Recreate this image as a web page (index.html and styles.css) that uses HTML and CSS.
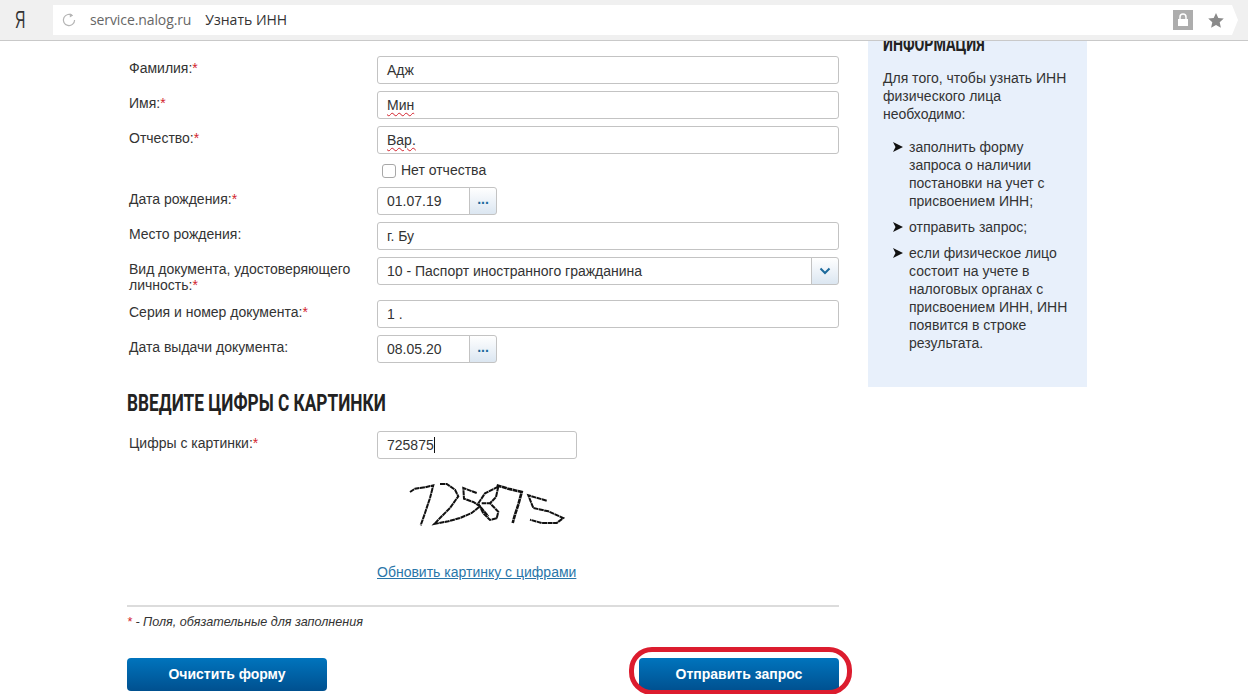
FILE: index.html
```html
<!DOCTYPE html>
<html>
  <head>
    <meta charset="utf-8">
    <title>Узнать ИНН</title>
    <link rel="stylesheet" href="styles.css">
  </head>
  <body>
    <div class="toolbar">
      <div class="ya">Я</div>
      <div class="omnibox">
        <svg class="reload" width="16" height="16" viewBox="0 0 16 16"><path d="M11.5 3.6A5.6 5.6 0 1 0 13.6 8" fill="none" stroke="#b5b5b5" stroke-width="1.2"/><path d="M8.8 1.2l3.2 2.3-3.2 1.9z" fill="#b5b5b5"/></svg>
        <span class="host">service.nalog.ru</span>
        <span class="page-title">Узнать ИНН</span>
        <span class="lock">
          <svg width="12" height="14" viewBox="0 0 12 14"><path d="M3 6V4a3 3 0 0 1 6 0v2" fill="none" stroke="#fff" stroke-width="1.5"/><rect x="1" y="6" width="10" height="7" fill="#fff"/></svg>
        </span>
        <svg class="star" width="16" height="15" viewBox="0 0 16 15"><path d="M8 0l2.3 5 5.5.6-4.1 3.7 1.2 5.4L8 12l-4.9 2.7 1.2-5.4L.2 5.600 5.700 5z" fill="#8a8a8a"/></svg>
      </div>
    </div>

    <div class="main">
      <div class="form">
        <div class="row">
          <div class="label">Фамилия:<span class="req">*</span></div>
          <div class="field">Адж</div>
        </div>
        <div class="row">
          <div class="label">Имя:<span class="req">*</span></div>
          <div class="field"><span class="typo">Мин</span></div>
        </div>
        <div class="row">
          <div class="label">Отчество:<span class="req">*</span></div>
          <div class="field"><span class="typo">Вар.</span></div>
        </div>
        <div class="row">
          <div></div>
          <div class="check"><span class="box"></span>Нет отчества</div>
        </div>
        <div class="row">
          <div class="label">Дата рождения:<span class="req">*</span></div>
          <div class="combo date">
            <div class="field">01.07.19</div>
            <div class="side dots">...</div>
          </div>
        </div>
        <div class="row">
          <div class="label">Место рождения:</div>
          <div class="field">г. Бу</div>
        </div>
        <div class="row">
          <div class="label">Вид документа, удостоверяющего личность:<span class="req">*</span></div>
          <div class="combo">
            <div class="field">10 - Паспорт иностранного гражданина</div>
            <div class="side">
              <svg width="12" height="8" viewBox="0 0 12 8"><path d="M1.500 1.500L6 6l4.500-4.500" fill="none" stroke="#1c6a9c" stroke-width="2"/></svg>
            </div>
          </div>
        </div>
        <div class="row">
          <div class="label">Серия и номер документа:<span class="req">*</span></div>
          <div class="field">1 .</div>
        </div>
        <div class="row">
          <div class="label">Дата выдачи документа:</div>
          <div class="combo date">
            <div class="field">08.05.20</div>
            <div class="side dots">...</div>
          </div>
        </div>

        <h2 class="title">Введите цифры с картинки</h2>

        <div class="row">
          <div class="label">Цифры с картинки:<span class="req">*</span></div>
          <div class="field captcha-field">725875<span class="caret"></span></div>
        </div>
        <div class="row">
          <div></div>
          <div>
            <svg class="captcha" width="160" height="50" viewBox="405 480 160 50" fill="none" stroke="#111" stroke-width="2" stroke-dasharray="5 .5">
              <path d="M410 492l5-3.300 10-1.400 8.300-2-3.300 12.700-5 15-4.300 12.300"/>
              <path d="M440 484h6.700l8.300 5.700 3.300 6.600-8.300 11.700-10 10-5.700 6 14-2.700 11.700-3.300 11.700-5 8.300-6.700"/>
              <path d="M476.700 493l-13.400-5 .7 10.700 9.300 3.300 6.700 4.300 8.300 10"/>
              <path d="M498.300 486.700L485 493.300l-6.700 10 5 10 6.700 6.700 6.700-1.700 1.600-6.600-8.300-8.400-8.300 0M498.300 486.700L496 497l-6 6.300"/>
              <path d="M496.700 485.300l11.600 3.400 13.400 3.300-3.400 12.700-3.300 10-2.300 8.300" stroke-width="2.600"/>
              <path d="M546.700 500.700l-18.400-5.400 5 12.700 15 3.300 15 6.700-6.600 5h-15l-11.700-3.300"/>
            </svg>
            <div><a class="refresh" href="#">Обновить картинку с цифрами</a></div>
          </div>
        </div>

        <div class="note"><span class="req">*</span> - Поля, обязательные для заполнения</div>

        <div class="buttons">
          <a class="btn" href="#">Очистить форму</a>
          <a class="btn btn-marked" href="#">Отправить запрос</a>
        </div>
      </div>

      <div class="info">
        <h3>Информация</h3>
        <p>Для того, чтобы узнать ИНН физического лица необходимо:</p>
        <ul>
          <li><span>заполнить форму запроса о наличии постановки на учет с присвоением ИНН;</span></li>
          <li><span>отправить запрос;</span></li>
          <li><span>если физическое лицо состоит на учете в налоговых органах с присвоением ИНН, ИНН появится в строке результата.</span></li>
        </ul>
      </div>
    </div>
  </body>
</html>
```

FILE: styles.css
```css
*{
  margin:0;
  padding:0;
  box-sizing:border-box;
}
html,body{
  height:694px;
  overflow:hidden;
}
body{
  background:#fff;
  color:#333;
  font:14px/16px "Liberation Sans",Arial,sans-serif;
}

/* browser bar */
.toolbar{
  height:41px;
  display:flex;
  align-items:flex-start;
  padding:5px 10px 0 0;
  background:#f0f0f0;
  border-bottom:1px solid #c9c9c9;
}
.ya{
  width:53px;
  height:30px;
  padding-left:15px;
  color:#333;
  font:23px/30px "Liberation Sans",sans-serif;
  transform:scaleX(.62);
  transform-origin:15px center;
}
.omnibox{
  flex:1;
  height:30px;
  display:flex;
  align-items:center;
  padding:0 14px 0 8px;
  background:#fff;
  clip-path:polygon(0 0,calc(100% - 6px) 0,100% 50%,calc(100% - 6px) 100%,0 100%);
  font:14px/30px "Open Sans","Noto Sans",sans-serif;
}
.reload{
  margin-right:13px;
}
.host{
  color:#666;
  letter-spacing:-.1px;
}
.page-title{
  margin-left:14px;
  color:#333;
}
.lock{
  width:20px;
  height:20px;
  margin-left:auto;
  display:flex;
  align-items:center;
  justify-content:center;
  background:#adadad;
}
.star{
  margin-left:15px;
}

.main{
  display:flex;
  align-items:flex-start;
  padding-left:127px;
}
.form{
  width:712px;
  padding-top:15px;
}
.row{
  display:grid;
  grid-template-columns:250px 1fr;
  margin-bottom:7px;
}
.label{
  padding:4px 20px 0 2px;
}
.req{
  color:#d3232e;
}
.field{
  height:28px;
  padding:0 9px;
  border:1px solid #c3c3c3;
  border-radius:3px;
  background:#fff;
  line-height:26px;
}
.typo{
  text-decoration:underline wavy #d3232e 1px;
  text-underline-offset:2px;
}
.check{
  height:19px;
  display:flex;
  align-items:center;
  padding-left:5px;
  line-height:19px;
}
.box{
  width:14px;
  height:14px;
  margin-right:5px;
  border:1px solid #a8a8a8;
  border-radius:3px;
  background:#fff;
}

.combo{
  display:flex;
}
.combo .field{
  flex:1;
  border-radius:3px 0 0 3px;
}
.date{
  width:120px;
}
.side{
  width:28px;
  height:28px;
  display:flex;
  align-items:center;
  justify-content:center;
  margin-left:-1px;
  border:1px solid #c3c3c3;
  border-radius:0 3px 3px 0;
  background:linear-gradient(#fff,#dbe6f1);
}
.dots{
  color:#1c6a9c;
  font-weight:bold;
  line-height:20px;
  padding-bottom:4px;
}

/* no condensed face is installed, so the headings are narrowed */
.title{
  margin:28px 0 16px;
  color:#222;
  font:bold 24px/24px "Roboto",sans-serif;
  text-transform:uppercase;
  white-space:nowrap;
  transform:scaleX(.72);
  transform-origin:left;
}
.captcha-field{
  width:200px;
}
.caret{
  display:inline-block;
  width:1px;
  height:16px;
  background:#111;
  vertical-align:-3px;
}
.captcha{
  display:block;
  margin:14px 0 34px 28px;
}
.refresh{
  color:#2a76a9;
}
.note{
  margin-top:25px;
  padding-top:7px;
  border-top:2px solid #dcdcdc;
  font-size:12.600px;
  font-style:italic;
}

.buttons{
  display:flex;
  justify-content:space-between;
  margin-top:28px;
}
.btn{
  position:relative;
  width:200px;
  height:33px;
  border-radius:4px;
  background:linear-gradient(#0074bd,#00508f);
  color:#fff;
  font-weight:bold;
  line-height:33px;
  text-align:center;
  text-decoration:none;
}
.btn-marked::after{
  content:"";
  position:absolute;
  top:-11px;
  left:-10px;
  right:-13px;
  bottom:-4px;
  border:5px solid #dc1c2e;
  border-radius:23px;
}

/* right column */
.info{
  width:219px;
  height:346px;
  margin-left:29px;
  padding:0 15px;
  overflow:hidden;
  background:#e8f0fb;
}
.info h3{
  margin:-6px 0 16px;
  color:#222;
  font:bold 20px/18px "Roboto",sans-serif;
  text-transform:uppercase;
  white-space:nowrap;
  transform:scaleX(.71);
  transform-origin:left;
}
.info p{
  line-height:18px;
}
.info ul{
  margin-top:15px;
  list-style:none;
}
.info li{
  display:flex;
  gap:6px;
  margin-bottom:8px;
  padding-left:10px;
  line-height:18px;
}
.info li::before{
  content:"";
  flex:none;
  width:10px;
  height:10px;
  margin-top:4px;
  background:#111;
  clip-path:polygon(0 0,100% 50%,0 100%,25% 50%);
}
```
